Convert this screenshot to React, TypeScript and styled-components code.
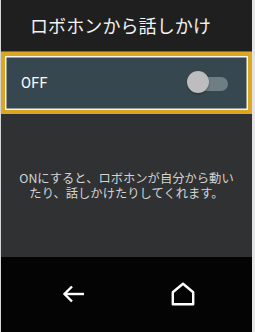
import styled, { createGlobalStyle } from "styled-components";

const GlobalStyle = createGlobalStyle`
  html, body {
    margin: 0;
    padding: 0;
    background: #ffffff;
  }
  * {
    box-sizing: border-box;
  }
`;

const Frame = styled.div`
  width: 255px;
  height: 332px;
  display: flex;
  flex-direction: column;
  border-left: 1px solid #d6d6d6;
  border-right: 3px solid #e4e4e4;
  background: #2f3133;
  font-family: "Noto Sans CJK JP", "Noto Sans", sans-serif;
  overflow: hidden;
`;

const Header = styled.div`
  height: 52px;
  background: #1f1f1f;
  color: #f2f2f2;
  font-size: 18px;
  display: flex;
  align-items: center;
  padding: 0 0 2px 29px;
  border-bottom: 1px solid #6a6a6a;
  letter-spacing: 0.1px;
`;

const Highlight = styled.div`
  height: 62px;
  border: 4px solid #dba622;
  background: #37474f;
  box-shadow: inset 0 0 0 1.5px #f4f4f4;
  display: flex;
  align-items: center;
  justify-content: space-between;
  padding: 0 20px 0 16px;
`;

const RowLabel = styled.span`
  color: #ffffff;
  font-family: "Roboto", "Noto Sans", sans-serif;
  font-size: 14.5px;
  letter-spacing: 0.3px;
`;

const Switch = styled.div<{ $on: boolean }>`
  position: relative;
  width: 36px;
  height: 14px;
  border-radius: 7px;
  background: ${(p) => (p.$on ? "#80cbc4" : "#6e7e82")};
  margin-top: 1px;
`;

const Thumb = styled.div<{ $on: boolean }>`
  position: absolute;
  top: -6px;
  left: ${(p) => (p.$on ? "17px" : "-5px")};
  width: 22px;
  height: 22px;
  border-radius: 50%;
  background: #bdbdbd;
  box-shadow: 0 1px 2px rgba(0, 0, 0, 0.35);
`;

const Body = styled.div`
  flex: 1;
  display: flex;
  flex-direction: column;
  align-items: center;
  justify-content: center;
  padding: 0 8px;
`;

const Line = styled.p`
  margin: 0;
  color: #d4d4d4;
  font-size: 12.3px;
  line-height: 15px;
  text-align: center;
  white-space: nowrap;
`;

const NavBar = styled.div`
  height: 75px;
  background: #050404;
  display: flex;
  align-items: center;
  justify-content: center;
  gap: 86px;
  padding: 0 0 2px 2px;
`;

const NavButton = styled.div`
  width: 24px;
  height: 24px;
  display: flex;
  align-items: center;
  justify-content: center;
`;

export default function App() {
  const on = false;
  return (
    <>
      <GlobalStyle />
      <Frame>
        <Header>ロボホンから話しかけ</Header>
        <Highlight>
          <RowLabel>{on ? "ON" : "OFF"}</RowLabel>
          <Switch $on={on}>
            <Thumb $on={on} />
          </Switch>
        </Highlight>
        <Body>
          <Line>ONにすると、ロボホンが自分から動い</Line>
          <Line>たり、話しかけたりしてくれます。</Line>
        </Body>
        <NavBar>
          <NavButton>
            <svg width="22" height="18" viewBox="0 0 22 18" fill="none" stroke="#ffffff" strokeWidth="2.4">
              <path d="M22 9H2.5" />
              <path d="M10 1.5L2.5 9l7.5 7.5" />
            </svg>
          </NavButton>
          <NavButton>
            <svg width="24" height="24" viewBox="0 0 24 24" fill="none" stroke="#ffffff" strokeWidth="2.4" strokeLinejoin="round">
              <path d="M1.8 10.2L12 1.8l10.2 8.4V22.2H1.8z" />
            </svg>
          </NavButton>
        </NavBar>
      </Frame>
    </>
  );
}
